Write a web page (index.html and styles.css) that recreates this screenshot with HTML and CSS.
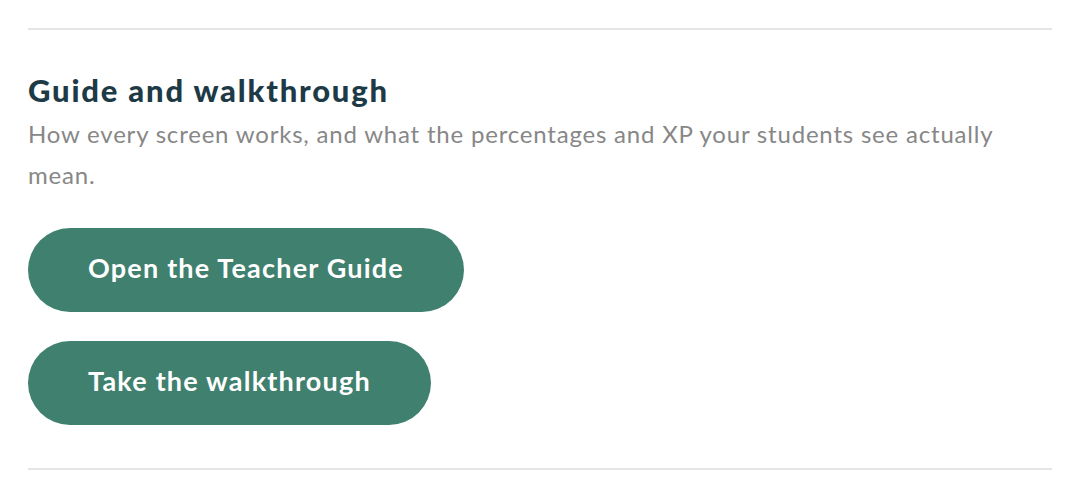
FILE: index.html
```html
<!DOCTYPE html>
<html lang="en">
<head>
    <meta charset="UTF-8">
    <meta name="viewport" content="width=device-width, initial-scale=1.0">
    <title>Guide and walkthrough</title>
    <link rel="stylesheet" href="styles.css">
</head>
<body>
    <section class="guide-section">
        <h2 class="section-title">Guide and walkthrough</h2>
        <p class="section-text">How every screen works, and what the percentages and XP your students see actually mean.</p>
        <div class="buttons">
            <a class="pill-button" href="#guide">Open the Teacher Guide</a>
            <a class="pill-button" href="#walkthrough">Take the walkthrough</a>
        </div>
    </section>
</body>
</html>
```

FILE: styles.css
```css
body {
    margin: 0;
    padding: 28px 28px 0;
    background: #fff;
    font-family: Lato, "Open Sans", sans-serif;
}

.guide-section {
    border-top: 2px solid #e6e6e6;
    border-bottom: 2px solid #e6e6e6;
    padding: 42px 0 43px;
}

.section-title {
    margin: 0;
    font-size: 31px;
    line-height: 36px;
    font-weight: 900;
    letter-spacing: 1.8px;
    color: #1d3a46;
}

.section-text {
    margin: 5px 0 0;
    max-width: 1000px;
    font-size: 24px;
    line-height: 41px;
    letter-spacing: 0.8px;
    color: #878787;
}

.buttons {
    margin-top: 33px;
    display: flex;
    flex-direction: column;
    align-items: flex-start;
    gap: 29px;
}

.pill-button {
    box-sizing: border-box;
    display: inline-flex;
    align-items: center;
    height: 84px;
    padding: 0 60px 5px;
    border-radius: 42px;
    background-color: #40806e;
    color: #fff;
    font-size: 27px;
    font-weight: 700;
    letter-spacing: 1.2px;
    text-decoration: none;
}
```
